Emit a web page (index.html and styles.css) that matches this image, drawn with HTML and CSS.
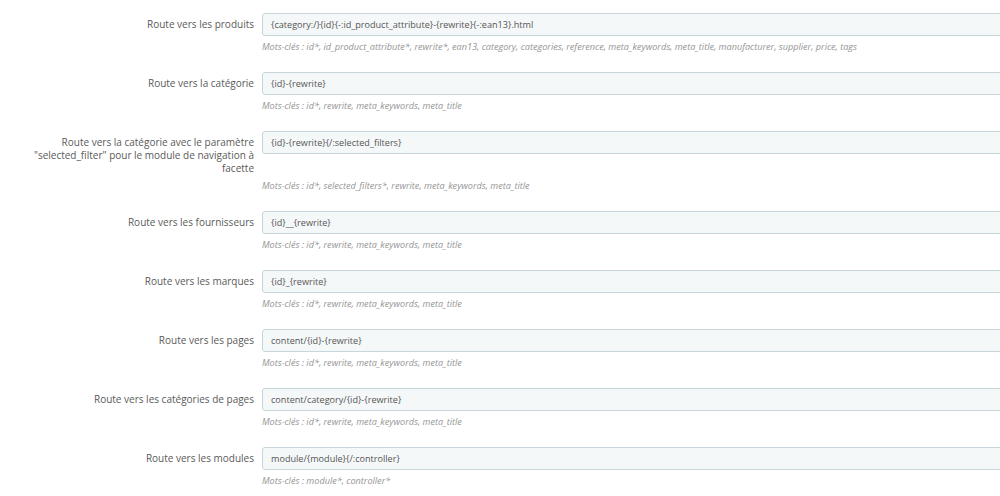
FILE: index.html
```html
<!DOCTYPE html>
<html lang="fr">
<head>
<meta charset="utf-8">
<title>Routes</title>
<link rel="stylesheet" href="styles.css">
</head>
<body>
<div class="form">
  <div class="row">
    <label class="lbl">Route vers les produits</label>
    <div class="field"><div class="input">{category:/}{id}{-:id_product_attribute}-{rewrite}{-:ean13}.html</div></div>
    <p class="help">Mots-clés : id*, id_product_attribute*, rewrite*, ean13, category, categories, reference, meta_keywords, meta_title, manufacturer, supplier, price, tags</p>
  </div>
  <div class="row">
    <label class="lbl">Route vers la catégorie</label>
    <div class="field"><div class="input">{id}-{rewrite}</div></div>
    <p class="help">Mots-clés : id*, rewrite, meta_keywords, meta_title</p>
  </div>
  <div class="row">
    <label class="lbl">Route vers la catégorie avec le paramètre "selected_filter" pour le module de navigation à facette</label>
    <div class="field"><div class="input">{id}-{rewrite}{/:selected_filters}</div></div>
    <p class="help">Mots-clés : id*, selected_filters*, rewrite, meta_keywords, meta_title</p>
  </div>
  <div class="row">
    <label class="lbl">Route vers les fournisseurs</label>
    <div class="field"><div class="input">{id}__{rewrite}</div></div>
    <p class="help">Mots-clés : id*, rewrite, meta_keywords, meta_title</p>
  </div>
  <div class="row">
    <label class="lbl">Route vers les marques</label>
    <div class="field"><div class="input">{id}_{rewrite}</div></div>
    <p class="help">Mots-clés : id*, rewrite, meta_keywords, meta_title</p>
  </div>
  <div class="row">
    <label class="lbl">Route vers les pages</label>
    <div class="field"><div class="input">content/{id}-{rewrite}</div></div>
    <p class="help">Mots-clés : id*, rewrite, meta_keywords, meta_title</p>
  </div>
  <div class="row">
    <label class="lbl">Route vers les catégories de pages</label>
    <div class="field"><div class="input">content/category/{id}-{rewrite}</div></div>
    <p class="help">Mots-clés : id*, rewrite, meta_keywords, meta_title</p>
  </div>
  <div class="row">
    <label class="lbl">Route vers les modules</label>
    <div class="field"><div class="input">module/{module}{/:controller}</div></div>
    <p class="help">Mots-clés : module*, controller*</p>
  </div>
</div>
</body>
</html>
```
FILE: styles.css
```css
html, body {
  margin: 0;
  padding: 0;
  background: #fff;
  overflow: hidden;
}
body {
  font-family: "Open Sans", "DejaVu Sans", sans-serif;
  font-size: 10px;
  color: #555;
}
.form {
  padding-top: 13px;
  width: 1010px;
}
.row {
  display: grid;
  grid-template-columns: 262px 1fr;
}
.lbl {
  grid-column: 1;
  grid-row: 1;
  text-align: right;
  padding: 5px 8px 0 30px;
  line-height: 13px;
  font-size: 10px;
  color: #5a5a5a;
}
.field {
  grid-column: 2;
  grid-row: 1;
}
.input {
  height: 21px;
  line-height: 21px;
  border: 1px solid #c7d6db;
  border-radius: 3px;
  background: #f5f8f9;
  padding: 0 8px;
  color: #555;
  font-size: 9.1px;
  white-space: nowrap;
}
.help {
  grid-column: 2;
  grid-row: 2;
  margin: 4px 0 19px 0;
  line-height: 13px;
  font-style: italic;
  color: #959595;
  font-size: 9.1px;
}
```
